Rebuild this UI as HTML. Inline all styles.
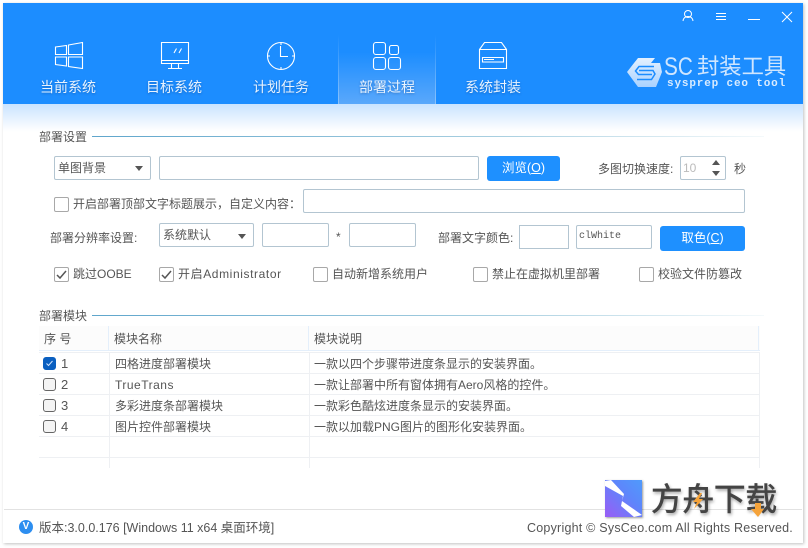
<!DOCTYPE html>
<html lang="zh">
<head>
<meta charset="utf-8">
<style>
html,body{margin:0;padding:0;background:#fff;}
body{width:808px;height:548px;overflow:hidden;position:relative;font-family:"Liberation Sans","Noto Sans CJK SC",sans-serif;font-size:12px;color:#555;}
.a{position:absolute;box-sizing:border-box;}
.t{position:absolute;white-space:nowrap;line-height:16px;}
.box{position:absolute;box-sizing:border-box;border:1px solid #b3c5d1;border-radius:2px;background:#fff;}
.btn{position:absolute;box-sizing:border-box;background:#1e90ff;border-radius:3px;color:#fff;text-align:center;font-size:12.5px;}
.cb{position:absolute;box-sizing:border-box;width:15px;height:15px;border:1px solid #a8a8a8;border-radius:2px;background:#fff;}
.nav{position:absolute;top:79px;color:#e8f3ff;font-size:14px;line-height:16px;white-space:nowrap;text-shadow:0 1px 2px rgba(0,40,100,.35);}
.tri{position:absolute;width:0;height:0;border-left:4.5px solid transparent;border-right:4.5px solid transparent;border-top:5px solid #555;}
.h{position:absolute;left:39px;width:721px;height:1px;background:#eef0f3;}
.v{position:absolute;width:1px;background:#eef0f3;}
.r{position:absolute;white-space:nowrap;line-height:16px;font-size:12px;color:#555;}
.rc{position:absolute;left:43px;box-sizing:border-box;width:13px;height:13px;border:1px solid #666;border-radius:3px;background:#f4f4f4;}
svg{position:absolute;overflow:visible;}
</style>
</head>
<body>
<!-- window -->
<div class="a" style="left:3px;top:3px;width:800px;height:540px;background:#fff;box-shadow:1px 1px 3px rgba(0,0,0,.25);"></div>
<div class="a" style="left:3px;top:3px;width:800px;height:101px;background:#1c8dff;"></div>
<div class="a" style="left:3px;top:104px;width:800px;height:28px;background:linear-gradient(#c9e3ff,#fbfdff 90%,#fff);"></div>

<!-- active tab -->
<div class="a" style="left:338px;top:35px;width:98px;height:69px;background:linear-gradient(#1c8dff 25%,#5aa8fb);"></div>
<div class="a" style="left:338px;top:35px;width:1px;height:69px;background:linear-gradient(#1c8dff,#8cc3fb);"></div>
<div class="a" style="left:435px;top:35px;width:1px;height:69px;background:linear-gradient(#1c8dff,#8cc3fb);"></div>

<!-- window icons -->
<svg style="left:0;top:0" width="808" height="110" fill="none" stroke="#fff" stroke-width="1">
 <!-- title buttons -->
 <circle cx="688" cy="14" r="3.5"/><path d="M683 21c.5-3.5 2.5-4.5 5-4.500s4.500 1 5 4.500"/>
 <path d="M716 13.500h10M716 16.500h10M716 19.500h10" />
 <path d="M748 19.500h12" />
 <path d="M782 12l10 10M792 12l-10 10" />
 <!-- windows -->
 <path d="M55.500 47l11-1.500v9h-11zM68.500 45l14-2.500v12h-14zM55.500 57h11v9l-11-1.500zM68.500 57h14v11.500l-14-2z" stroke-width="1.100"/>
 <!-- monitor -->
 <path d="M161.500 42.500h27v21h-27zM161.500 60.500h27M171.500 63.500v5M178.500 63.500v5M168 68.500h14" stroke-width="1.100"/>
 <path d="M174 53l2.500-4.500M179 53l2.500-4.500" stroke-width="1.100"/>
 <!-- clock -->
 <circle cx="281" cy="56" r="13.500" stroke-width="1.100"/>
 <path d="M280.500 46v10.500h7.500M281 42.500v2.500M281 67v2.500M267.500 56h2.500M292 56h2.500" stroke-width="1.100"/>
 <!-- grid -->
 <rect x="373.500" y="42.500" width="12" height="12" rx="2.500" stroke-width="1.100"/>
 <rect x="389.500" y="45.500" width="9" height="9" rx="2" stroke-width="1.100"/>
 <rect x="373.500" y="57.500" width="12" height="12" rx="2.500" stroke-width="1.100"/>
 <rect x="388.500" y="57.500" width="12" height="12" rx="2.500" stroke-width="1.100"/>
 <!-- box -->
 <path d="M479.500 49.500h27v19h-27zM479.500 49.500l5-7h17l5 7M482.500 57.500h21v4.500h-21z" stroke-width="1.100"/>
 <path d="M484 59.500h10" stroke-width="1"/>
 <!-- logo -->
 <defs><linearGradient id="lg" x1="0" y1="0" x2="0" y2="1"><stop offset="0" stop-color="#e4f1ff"/><stop offset="1" stop-color="#a9d2ff"/></linearGradient></defs>
 <path d="M638 58H655L651 63H660L662 72L656 87H638L627 72Z" fill="url(#lg)" stroke="none"/>
 <path d="M654 66.500H639L635.500 71L638.500 74.500H652" stroke="#1c8dff" stroke-width="1.500"/>
 <path d="M639 70.500H653L655 74L651.500 79.500H637" stroke="#1c8dff" stroke-width="1.500"/>
</svg>

<div class="nav" style="left:40px">当前系统</div>
<div class="nav" style="left:146px">目标系统</div>
<div class="nav" style="left:253px">计划任务</div>
<div class="nav" style="left:359px">部署过程</div>
<div class="nav" style="left:465px">系统封装</div>

<div class="t" style="left:664px;top:53px;font-size:25px;line-height:28px;color:#cfe6ff;transform:scaleX(.83);transform-origin:left center;">SC</div>
<div class="t" style="left:697px;top:53px;font-size:22.300px;line-height:28px;color:#cfe6ff;">封装工具</div>
<div class="t" style="left:667px;top:76px;font-family:'Liberation Mono',monospace;font-size:11px;letter-spacing:.84px;color:#d8ebff;font-weight:bold;">sysprep ceo tool</div>

<!-- section 1 -->
<div class="t" style="left:39px;top:129px;">部署设置</div>
<div class="a" style="left:92px;top:136px;width:672px;height:1px;background:linear-gradient(90deg,#5fa6cc,#a8cfe0 60%,#f4f9fb);"></div>

<div class="box" style="left:54px;top:156px;width:97px;height:24px;"></div>
<div class="t" style="left:58px;top:160px;">单图背景</div>
<div class="tri" style="left:135px;top:166px;"></div>
<div class="box" style="left:159px;top:156px;width:320px;height:24px;"></div>
<div class="btn" style="left:487px;top:156px;width:73px;height:25px;line-height:25px;">浏览(<u>O</u>)</div>
<div class="t" style="left:598px;top:161px;">多图切换速度:</div>
<div class="box" style="left:680px;top:156px;width:46px;height:24px;"></div>
<div class="t" style="left:683px;top:160px;color:#bbb;">10</div>
<div class="tri" style="left:712px;top:160px;border-top:0;border-bottom:5px solid #555;"></div>
<div class="tri" style="left:712px;top:171px;"></div>
<div class="t" style="left:734px;top:161px;">秒</div>

<div class="cb" style="left:54px;top:197px;"></div>
<div class="t" style="left:73px;top:196px;">开启部署顶部文字标题展示，自定义内容：</div>
<div class="box" style="left:303px;top:189px;width:442px;height:24px;"></div>

<div class="t" style="left:50px;top:230px;">部署分辨率设置:</div>
<div class="box" style="left:159px;top:223px;width:95px;height:24px;"></div>
<div class="t" style="left:163px;top:227px;">系统默认</div>
<div class="tri" style="left:238px;top:234px;"></div>
<div class="box" style="left:262px;top:223px;width:67px;height:24px;"></div>
<div class="t" style="left:336px;top:229px;">*</div>
<div class="box" style="left:349px;top:223px;width:67px;height:24px;"></div>
<div class="t" style="left:438px;top:230px;">部署文字颜色:</div>
<div class="box" style="left:519px;top:225px;width:50px;height:24px;border-radius:0;"></div>
<div class="box" style="left:576px;top:225px;width:76px;height:24px;"></div>
<div class="t" style="left:579px;top:229px;font-family:'Liberation Mono',monospace;font-size:10px;">clWhite</div>
<div class="btn" style="left:660px;top:226px;width:85px;height:25px;line-height:25px;">取色(<u>C</u>)</div>

<div class="cb" style="left:54px;top:267px;"></div>
<div class="t" style="left:73px;top:266px;">跳过OOBE</div>
<div class="cb" style="left:159px;top:267px;"></div>
<div class="t" style="left:178px;top:266px;letter-spacing:.6px;">开启Administrator</div>
<div class="cb" style="left:313px;top:267px;"></div>
<div class="t" style="left:332px;top:266px;">自动新增系统用户</div>
<div class="cb" style="left:473px;top:267px;"></div>
<div class="t" style="left:492px;top:266px;">禁止在虚拟机里部署</div>
<div class="cb" style="left:639px;top:267px;"></div>
<div class="t" style="left:658px;top:266px;">校验文件防篡改</div>
<svg style="left:0;top:0" width="200" height="290" fill="none" stroke="#555" stroke-width="1.500">
 <path d="M57 275l3 3 6-7M162 275l3 3 6-7"/>
</svg>

<!-- section 2 -->
<div class="t" style="left:39px;top:308px;">部署模块</div>
<div class="a" style="left:92px;top:315px;width:672px;height:1px;background:linear-gradient(90deg,#5fa6cc,#a8cfe0 60%,#f4f9fb);"></div>

<div class="a" style="left:39px;top:326px;width:721px;height:24px;background:#fcfcfc;"></div>
<div class="a" style="left:39px;top:350px;width:721px;height:1px;background:#e4effb;"></div>
<div class="a" style="left:39px;top:352px;width:721px;height:1px;background:#eef0f3;"></div>
<div class="a" style="left:108px;top:326px;width:1px;height:24px;background:#e4effb;"></div>
<div class="a" style="left:308px;top:326px;width:1px;height:24px;background:#e4effb;"></div>
<div class="a" style="left:758px;top:326px;width:1px;height:24px;background:#e4effb;"></div>
<div class="t" style="left:44px;top:331px;">序 号</div>
<div class="t" style="left:114px;top:331px;">模块名称</div>
<div class="t" style="left:314px;top:331px;">模块说明</div>

<div class="h" style="top:373px"></div>
<div class="h" style="top:394px"></div>
<div class="h" style="top:415px"></div>
<div class="h" style="top:436px"></div>
<div class="h" style="top:457px"></div>
<div class="v" style="left:109px;top:352px;height:116px"></div>
<div class="v" style="left:309px;top:352px;height:116px"></div>
<div class="v" style="left:759px;top:352px;height:116px"></div>

<div class="rc" style="top:357px;background:#0a5fc0;border-color:#0a5fc0;"></div>
<svg style="left:0;top:0" width="60" height="380" fill="none" stroke="#cfe3ff" stroke-width="1"><path d="M46.500 363.500l2 2 4-4.500"/></svg>
<div class="rc" style="top:378px;"></div>
<div class="rc" style="top:399px;"></div>
<div class="rc" style="top:420px;"></div>

<div class="r" style="left:61px;top:356px;font-size:13px;">1</div>
<div class="r" style="left:61px;top:377px;font-size:13px;">2</div>
<div class="r" style="left:61px;top:398px;font-size:13px;">3</div>
<div class="r" style="left:61px;top:419px;font-size:13px;">4</div>
<div class="r" style="left:115px;top:356px;">四格进度部署模块</div>
<div class="r" style="left:115px;top:377px;letter-spacing:.5px;">TrueTrans</div>
<div class="r" style="left:115px;top:398px;">多彩进度条部署模块</div>
<div class="r" style="left:115px;top:419px;">图片控件部署模块</div>
<div class="r" style="left:314px;top:356px;">一款以四个步骤带进度条显示的安装界面。</div>
<div class="r" style="left:314px;top:377px;">一款让部署中所有窗体拥有Aero风格的控件。</div>
<div class="r" style="left:314px;top:398px;">一款彩色酷炫进度条显示的安装界面。</div>
<div class="r" style="left:314px;top:419px;">一款以加载PNG图片的图形化安装界面。</div>

<!-- footer -->
<div class="a" style="left:4px;top:509px;width:798px;height:1px;background:#e2e2e2;"></div>
<div class="a" style="left:19px;top:520px;width:14px;height:14px;border-radius:50%;background:#2d8ef0;color:#fff;font-size:10px;line-height:14px;text-align:center;font-weight:bold;">V</div>
<div class="t" style="left:39px;top:520px;font-size:12.500px;">版本:3.0.0.176 [Windows 11 x64 桌面环境]</div>
<div class="t" style="left:527px;top:520px;font-size:12.500px;letter-spacing:.22px;">Copyright © SysCeo.com All Rights Reserved.</div>

<!-- watermark -->
<div class="a" style="left:605px;top:480px;width:37px;height:37px;background:linear-gradient(45deg,#9a5cf5,#5e86fb 60%,#4f9bfb);box-shadow:1px 1px 2px rgba(0,0,0,.4);"></div>
<svg style="left:605px;top:480px" width="37" height="37"><path d="M0 1L6 0L19 14L17 21L37 35L29 37L16 26L18 16L0 6Z" fill="#fff"/></svg>
<div class="t" style="left:651px;top:481px;font-size:31.500px;line-height:36px;color:#444;font-weight:normal;-webkit-text-stroke:.7px #444;text-shadow:1px 2px 3px rgba(0,0,0,.45);">方舟下载</div>
<svg style="left:0;top:0" width="808" height="548"><path d="M700 493l-7 9h4l-3 7 9-10h-4l3-6z" fill="#f5a33a"/><path d="M755 503h6v6h3l-6 8-7-8h4z" fill="#f5a33a"/></svg>
</body>
</html>
